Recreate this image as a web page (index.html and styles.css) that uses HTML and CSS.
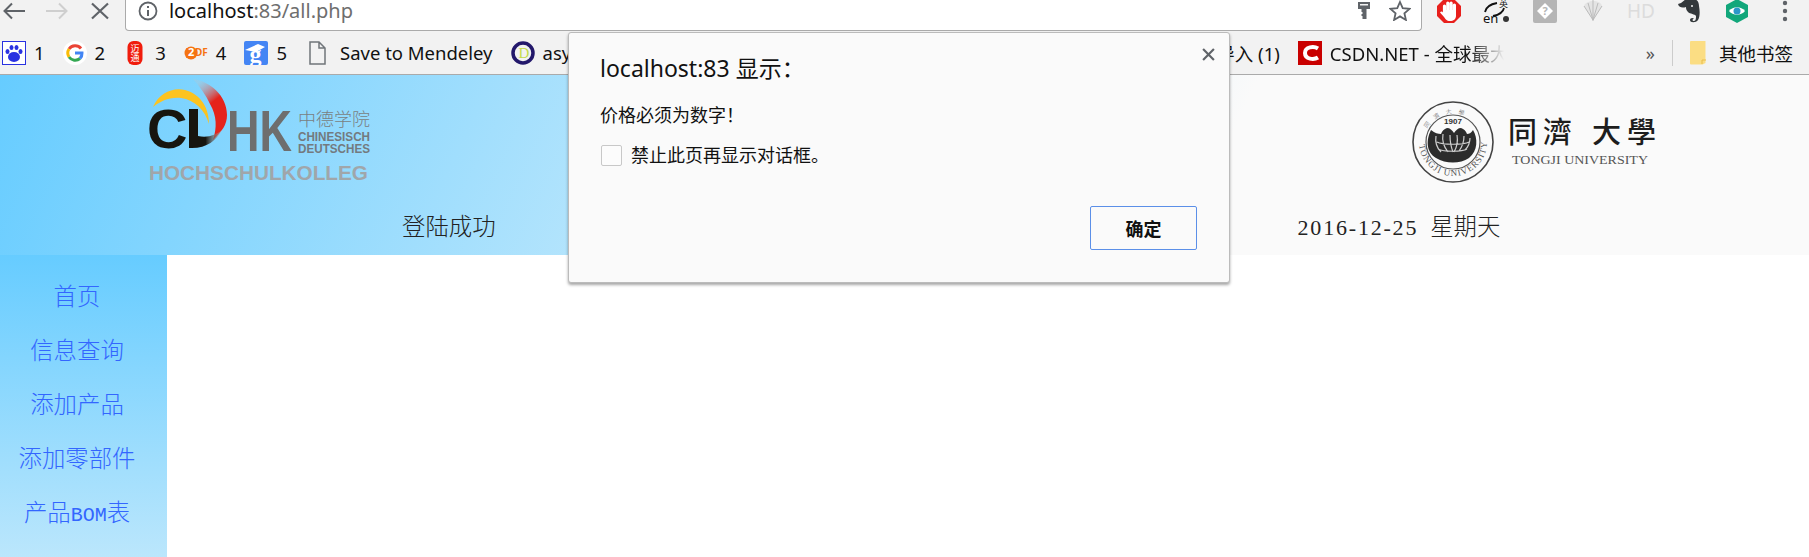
FILE: index.html
```html
<!DOCTYPE html>
<html lang="en">
<head>
    <meta charset="UTF-8">
    <title>localhost:83/all.php</title>
    <link rel="stylesheet" href="styles.css">
</head>
<body>
    <!-- browser toolbar -->
    <div class="toolbar">
        <div class="nav-buttons">
            <svg class="nav-icon" viewBox="0 0 24 20"><path d="M23 10H3M10 2.500L2.500 10l7.500 7.500" fill="none" stroke="#5f6368" stroke-width="2"/></svg>
            <svg class="nav-icon" viewBox="0 0 24 20"><path d="M1 10h20M14 2.500l7.500 7.500-7.500 7.500" fill="none" stroke="#cfcfcf" stroke-width="2"/></svg>
            <svg class="nav-icon" viewBox="0 0 24 20"><path d="M4 2.500l16 15M20 2.500l-16 15" fill="none" stroke="#5f6368" stroke-width="2.200"/></svg>
        </div>
        <div class="address-bar">
            <svg class="info-icon" viewBox="0 0 20 20"><circle cx="10" cy="10" r="8.500" fill="none" stroke="#5f6368" stroke-width="1.800"/><path d="M10 9v6M10 5v2" stroke="#5f6368" stroke-width="2"/></svg>
            <span class="url">localhost<span class="url-rest">:83/all.php</span></span>
            <svg class="key-icon" viewBox="0 0 14 20"><path d="M1 1h12v7H9.500v10h-4v-3h-1v-2h1v-2h-1V8H1z" fill="#5f6368"/><rect x="3" y="3" width="8" height="1.500" fill="#f2f2f2"/></svg>
            <svg class="star-icon" viewBox="0 0 22 21"><path d="M11 2l2.700 6.200 6.800.6-5.100 4.500 1.500 6.600L11 16.400l-5.900 3.500 1.500-6.600L1.500 8.800l6.800-.6z" fill="none" stroke="#5f6368" stroke-width="1.800"/></svg>
        </div>
        <div class="extensions">
            <div class="ext"><svg viewBox="0 0 26 26" width="26" height="26"><path d="M8 1h10l7 7v10l-7 7H8l-7-7V8z" fill="#e8201d"/><path d="M8.500 14V8M11.800 13V5M15.100 13V5M18.400 14V7" stroke="#fff" stroke-width="3.200" stroke-linecap="round" fill="none"/><path d="M7 12h13v6c0 3-2.500 5-6 5-3.500 0-4.500-2-6-4l-4-4.500c1-1.500 2.500-1 3 0z" fill="#fff"/></svg></div>
            <div class="ext"><svg viewBox="0 0 30 26" width="30" height="26"><path d="M3 14c1-5 6-8 12-9M22 10c-1 5-6 7-11 8" fill="none" stroke="#111" stroke-width="1.800"/><text x="17" y="9" class="ext-mini">英</text><text x="1" y="25" class="ext-en">en</text><circle cx="24" cy="21" r="3" fill="#333"/></svg></div>
            <div class="ext"><svg viewBox="0 0 24 24" width="24" height="24"><rect width="24" height="24" rx="2" fill="#b5b5b5"/><path d="M12 4l8 8-8 8-8-8z" fill="#fff"/><text x="12" y="16" class="ext-q">?</text></svg></div>
            <div class="ext"><svg viewBox="0 0 22 26" width="22" height="26"><path d="M2 8c2-6 16-7 18 0l-9 14z" fill="#e4e4e4"/><path d="M11 1v22M2 8l9 14M20 8l-9 14M6 5l5 17M16 5l-5 17" stroke="#bbb" fill="none" stroke-width="1"/></svg></div>
            <div class="ext ext-hd">HD</div>
            <div class="ext"><svg viewBox="0 0 22 26" width="22" height="26"><path d="M3 5l5-4h7c4 0 6 3 6 7 1 5 1 11-1 14-2 3-8 3-8 0 0-2 3-3 4-1-2 0-2 2 0 2 2 0 2-3 2-5-1-2-6-2-8-4-2-2-2-4-2-5-3 1-7 1-8-3z" fill="#33383b"/><circle cx="14" cy="8" r="1" fill="#f2f2f2"/></svg></div>
            <div class="ext"><svg viewBox="0 0 26 26" width="26" height="26"><path d="M13 1l11 6v12l-11 6-11-6V7z" fill="#12a77b"/><path d="M5 13c4-5 12-5 16 0-4 5-12 5-16 0z" fill="#fff"/><circle cx="13" cy="13" r="3.500" fill="#2b97c9"/></svg></div>
            <div class="ext"><svg viewBox="0 0 6 22" width="6" height="22"><circle cx="3" cy="3" r="2.200" fill="#5f6368"/><circle cx="3" cy="11" r="2.200" fill="#5f6368"/><circle cx="3" cy="19" r="2.200" fill="#5f6368"/></svg></div>
        </div>
    </div>

    <!-- bookmarks bar -->
    <div class="bookmarks">
        <div class="bm">
            <svg class="bm-icon" viewBox="0 0 24 24"><rect x=".5" y=".5" width="23" height="23" fill="#fff" stroke="#2932e1"/><ellipse cx="12" cy="16" rx="6" ry="5" fill="#2932e1"/><ellipse cx="5.500" cy="10.500" rx="2" ry="2.500" fill="#2932e1"/><ellipse cx="18.500" cy="10.500" rx="2" ry="2.500" fill="#2932e1"/><ellipse cx="9.500" cy="6.500" rx="2" ry="2.500" fill="#2932e1"/><ellipse cx="14.500" cy="6.500" rx="2" ry="2.500" fill="#2932e1"/></svg>
            <span>1</span>
        </div>
        <div class="bm">
            <svg class="bm-icon" viewBox="0 0 24 24"><circle cx="12" cy="12" r="12" fill="#fff"/><path d="M18 7.500A7.500 7.500 0 0 0 6 8" fill="none" stroke="#ea4335" stroke-width="3"/><path d="M6 8a7.500 7.500 0 0 0 0 8" fill="none" stroke="#fbbc05" stroke-width="3"/><path d="M6 16a7.500 7.500 0 0 0 11 1.500" fill="none" stroke="#34a853" stroke-width="3"/><path d="M12 12h7a7.500 7.500 0 0 1-2 5.500" fill="none" stroke="#4285f4" stroke-width="3"/></svg>
            <span>2</span>
        </div>
        <div class="bm">
            <svg class="bm-icon" viewBox="0 0 24 24"><rect x="4.500" y="0" width="15" height="24" rx="6" fill="#f01c0c"/><text x="12" y="11" class="seal">迈</text><text x="12" y="20" class="seal">通</text></svg>
            <span>3</span>
        </div>
        <div class="bm">
            <svg class="bm-icon" viewBox="0 0 24 24"><circle cx="7" cy="12" r="6.500" fill="#f57312"/><path d="M1 12h3M2 8l2 1M2 16l2-1" stroke="#f57312" stroke-width="2"/><text x="4" y="15" class="zdf">2</text><text x="11" y="15" class="zdf-rest">DF</text></svg>
            <span>4</span>
        </div>
        <div class="bm">
            <svg class="bm-icon" viewBox="0 0 24 24"><rect width="24" height="24" rx="2" fill="#4485f4"/><path d="M1 9l13-6 7 3-9 5z" fill="#fff"/><text x="11.500" y="21" class="scholar">g</text></svg>
            <span>5</span>
        </div>
        <div class="bm bm-doc">
            <svg class="bm-icon" viewBox="0 0 24 24"><path d="M5 1h9l6 6v16H5zM14 1v6h6" fill="none" stroke="#70757a" stroke-width="1.500"/></svg>
            <span>Save to Mendeley</span>
        </div>
        <div class="bm">
            <svg class="bm-icon" viewBox="0 0 24 24"><circle cx="12" cy="12" r="10" fill="none" stroke="#23186b" stroke-width="3.500"/><text x="13" y="17" class="mendeley-d">D</text></svg>
            <span>asy</span>
        </div>
        <div class="bm bm-end">
            <span>导入 (1)</span>
        </div>
        <div class="bm">
            <svg class="bm-icon" viewBox="0 0 24 24"><rect width="24" height="24" fill="#c90000"/><path d="M20 7.500c-4-2.500-13-2-13 4.500s9 7 13 4.500" fill="none" stroke="#fff" stroke-width="4"/></svg>
            <span class="bm-fade">CSDN.NET - 全球最大</span>
        </div>
        <div class="bm-more">»</div>
        <div class="bm-sep"></div>
        <div class="bm bm-other">
            <svg class="folder-icon" viewBox="0 0 18 24"><path d="M1.500 0h15v22l-3 1.500H2a1 1 0 0 1-1-1V1z" fill="#fbdd83"/><path d="M13 23v-4h4" fill="none" stroke="#e8bd4a"/></svg>
            <span>其他书签</span>
        </div>
    </div>

    <!-- page header -->
    <div class="header">
        <div class="logo-row">
            <svg class="logo-clhk" width="230" height="110" viewBox="0 0 230 110">
                <defs>
                    <linearGradient id="red-fade" x1="0.300" y1="0" x2="0.600" y2="0.700">
                        <stop offset="0" stop-color="#b9c4cc" stop-opacity="0.300"/>
                        <stop offset="0.600" stop-color="#e5231b"/>
                    </linearGradient>
                    <linearGradient id="black-fade" x1="0" y1="0" x2="1" y2="0">
                        <stop offset="0" stop-color="#17150f"/>
                        <stop offset="0.500" stop-color="#17150f"/>
                        <stop offset="1" stop-color="#bbb" stop-opacity="0.400"/>
                    </linearGradient>
                </defs>
                <path d="M8 32C14 18 28 12 40 15c12 3 24 14 24 34-4-14-14-24-28-26-12-1-20 3-28 9z" fill="#fcc31f"/>
                <path d="M48 4c16 2 34 16 34 36 0 10-5 16-14 25 4-12 4-24-3-36-4-9-10-17-17-25z" fill="url(#red-fade)"/>
                <text x="2" y="73" class="logo-c">C</text>
                <path d="M44 34h9v27c10 2 18-1 24-6-6 11-16 19-33 18z" fill="url(#black-fade)"/>
                <text x="82" y="76" class="logo-hk" textLength="65" lengthAdjust="spacingAndGlyphs">HK</text>
                <text x="153" y="51" class="logo-zh" textLength="72">中德学院</text>
                <text x="153" y="66" class="logo-de" textLength="72" lengthAdjust="spacingAndGlyphs">CHINESISCH</text>
                <text x="153" y="78" class="logo-de" textLength="72" lengthAdjust="spacingAndGlyphs">DEUTSCHES</text>
                <text x="4" y="105" class="logo-hs" textLength="219" lengthAdjust="spacingAndGlyphs">HOCHSCHULKOLLEG</text>
            </svg>
            <svg class="logo-tongji" width="250" height="90" viewBox="0 0 250 90">
                <circle cx="43" cy="42" r="40" fill="none" stroke="#444" stroke-width="1.600"/>
                <circle cx="43" cy="42" r="27" fill="none" stroke="#555" stroke-width="1.200"/>
                <path id="seal-low" d="M9 42a34 34 0 0 0 68 0" fill="none"/>
                <text class="seal-text"><textPath href="#seal-low" startOffset="3">TONGJI UNIVERSITY</textPath></text>
                <path id="seal-top" d="M14 36a30 30 0 0 1 58 0" fill="none"/>
                <text class="seal-top-text"><textPath href="#seal-top" startOffset="8">同　濟　大　學</textPath></text>
                <text x="43" y="24" class="seal-year">1907</text>
                <path d="M21 30c-5 10-5 22 5 28 10 6 24 6 33 0 9-7 9-20 4-28-2 3-4 4-6 4-1-3-3-5-6-6-3 0-5 2-7 5-2-3-4-5-7-5-3 1-5 3-6 6-3 0-6-1-10-4z" fill="#2c2c2c"/>
                <path d="M26 36c-1 6 1 12 5 16M33 34c-1 6 1 13 5 18M40 35c0 6 1 12 3 17M47 35c1 6 0 12-3 17M54 36c0 5-2 11-5 15M60 38c0 5-2 9-5 12M27 42c5 3 27 3 32 0M28 49c6 3 24 3 29 0" stroke="#ccc" stroke-width="1.200" fill="none"/>
                <text x="98" y="43" class="tongji-zh">同</text>
                <text x="133" y="43" class="tongji-zh">濟</text>
                <text x="182" y="43" class="tongji-zh">大</text>
                <text x="217" y="43" class="tongji-zh">學</text>
                <text x="102" y="64" class="tongji-en" textLength="136" lengthAdjust="spacingAndGlyphs">TONGJI UNIVERSITY</text>
            </svg>
        </div>
        <div class="status-row">
            <span class="login-msg">登陆成功</span>
            <span class="today"><span class="latin">2016-12-25</span><span class="today-week">星期天</span></span>
        </div>
    </div>

    <!-- side menu, right side is empty -->
    <div class="main">
        <ul class="side-menu">
            <li>首页</li>
            <li>信息查询</li>
            <li>添加产品</li>
            <li>添加零部件</li>
            <li>产品<span class="latin-bom">BOM</span>表</li>
        </ul>
    </div>

    <!-- js alert dialog -->
    <div class="dialog">
        <svg class="dialog-close" viewBox="0 0 12 12"><path d="M1 1l10 10M11 1L1 11" stroke="#5f6368" stroke-width="2"/></svg>
        <div class="dialog-title">localhost:83 显示：</div>
        <div class="dialog-msg">价格必须为数字！</div>
        <label class="dialog-check">
            <span class="checkbox"></span>
            <span>禁止此页再显示对话框。</span>
        </label>
        <div class="dialog-actions">
            <button class="ok-btn">确定</button>
        </div>
    </div>
</body>
</html>
```

FILE: styles.css
```css
html, body {
    margin: 0;
    padding: 0;
    height: 557px;
    overflow: hidden;
    background: #fff;
}

body {
    font-family: "Noto Sans", "Noto Sans CJK SC", sans-serif;
    color: #111;
}

/* toolbar */
.toolbar {
    display: flex;
    height: 31px;
    background: #f2f2f2;
    overflow: hidden;
}

.nav-buttons {
    display: flex;
    box-sizing: border-box;
    width: 125px;
    padding: 0 0 9px 2px;
    gap: 19px;
    align-items: center;
}

.nav-icon {
    width: 24px;
    height: 20px;
}

.address-bar {
    display: flex;
    align-items: center;
    box-sizing: border-box;
    width: 1298px;
    height: 31px;
    padding: 0 10px 9px 12px;
    background: #fff;
    border: 1px solid #aaa;
    border-top: 0;
    border-radius: 0 0 4px 4px;
}

.info-icon {
    width: 20px;
    height: 20px;
}

.url {
    margin-left: 11px;
    font-size: 20px;
    line-height: 24px;
    flex: 1;
}

.url-rest {
    color: #6e6e6e;
}

.key-icon {
    width: 14px;
    height: 20px;
    margin-right: 18px;
}

.star-icon {
    width: 22px;
    height: 21px;
}

.extensions {
    display: flex;
    margin-left: 3px;
}

.ext {
    flex: 0 0 48px;
    height: 21px;
    display: flex;
    align-items: center;
    justify-content: center;
}

.ext svg {
    flex: none;
}

.ext-hd {
    font-size: 19px;
    color: #dcdcdc;
}

.ext-mini {
    font-size: 9px;
    fill: #111;
}

.ext-en {
    font-size: 13px;
    fill: #111;
}

.ext-q {
    font-size: 11px;
    text-anchor: middle;
    fill: #b5b5b5;
    font-weight: bold;
}

/* bookmarks */
.bookmarks {
    display: flex;
    align-items: center;
    gap: 18px;
    height: 43px;
    padding-left: 2px;
    background: #f2f2f2;
    border-bottom: 1px solid #aaa;
    font-size: 18.500px;
}

.bm {
    display: flex;
    align-items: center;
    gap: 8px;
    white-space: nowrap;
}

.bm-doc {
    gap: 11px;
}

.bm-end {
    margin-left: auto;
}

.bm-icon {
    width: 24px;
    height: 24px;
    flex: none;
}

.bm-fade {
    display: inline-block;
    width: 174px;
    overflow: hidden;
    -webkit-mask-image: linear-gradient(to right, #000 80%, transparent);
    mask-image: linear-gradient(to right, #000 80%, transparent);
}

.bm-more {
    margin-left: 124px;
    font-size: 18px;
    color: #555;
}

.bm-sep {
    width: 1px;
    height: 26px;
    margin-left: -1px;
    background: #ccc;
}

.bm-other {
    gap: 12px;
    margin-left: -2px;
    margin-right: 16px;
}

.folder-icon {
    width: 18px;
    height: 24px;
}

.seal {
    font-size: 9px;
    fill: #fff;
    text-anchor: middle;
}

.zdf {
    font-size: 11px;
    font-weight: bold;
    fill: #fff;
}

.zdf-rest {
    font-size: 10px;
    font-weight: bold;
    fill: #f57312;
}

.scholar {
    font-family: "Liberation Serif", serif;
    font-size: 24px;
    font-weight: bold;
    fill: #fff;
    text-anchor: middle;
}

.mendeley-d {
    font-family: "Liberation Serif", serif;
    font-size: 15px;
    fill: #c3dc4c;
    text-anchor: middle;
}

/* header */
.header {
    height: 180px;
    background: linear-gradient(115deg, #66ccff 0, #fafafa 1142px);
    font-family: "Noto Sans CJK SC", sans-serif;
    font-size: 23.400px;
    font-weight: 300;
    color: #222;
}

.logo-row {
    display: flex;
    align-items: flex-start;
    height: 130px;
    padding-left: 145px;
}

.logo-clhk {
    flex: none;
}

.logo-tongji {
    flex: none;
    margin-left: 1035px;
    margin-top: 25px;
}

.logo-c {
    font-family: "Liberation Sans", sans-serif;
    font-weight: bold;
    font-size: 56px;
    fill: #17150f;
}

.logo-hk {
    font-family: "Liberation Sans", sans-serif;
    font-weight: bold;
    font-size: 58px;
    fill: #6e6e6e;
}

.logo-zh {
    font-family: "Noto Sans CJK SC", sans-serif;
    font-size: 18px;
    fill: #7a7f83;
}

.logo-de {
    font-family: "Liberation Sans", sans-serif;
    font-weight: bold;
    font-size: 12px;
    fill: #737a7f;
}

.logo-hs {
    font-family: "Liberation Sans", sans-serif;
    font-weight: bold;
    font-size: 20px;
    fill: #a0a6aa;
}

.seal-text {
    font-family: "Liberation Serif", serif;
    font-size: 9px;
    letter-spacing: 1px;
    fill: #555;
}

.seal-top-text {
    font-family: "Noto Sans CJK SC", sans-serif;
    font-size: 6px;
    fill: #555;
}

.seal-year {
    font-family: "Liberation Sans", sans-serif;
    font-size: 8px;
    font-weight: bold;
    text-anchor: middle;
    fill: #333;
}

.tongji-zh {
    font-family: "Noto Sans CJK SC", sans-serif;
    font-size: 29px;
    font-weight: 500;
    fill: #1d1d1d;
}

.tongji-en {
    font-family: "Liberation Serif", serif;
    font-size: 13px;
    fill: #555;
}

.status-row {
    display: flex;
    height: 40px;
    line-height: 40px;
    padding-left: 402px;
}

.today {
    margin-left: 802px;
}

.latin {
    font-family: "Liberation Serif", serif;
    font-size: 22px;
    font-weight: 400;
    letter-spacing: 1.800px;
}

.today-week {
    margin-left: 12px;
}

/* side menu */
.main {
    height: 302px;
}

.side-menu {
    box-sizing: border-box;
    width: 167px;
    height: 302px;
    margin: 0;
    padding: 13px 13px 0 0;
    list-style: none;
    text-align: center;
    background: linear-gradient(to bottom, #66ccff, #fafafa 527px);
    font-family: "Noto Sans CJK SC", sans-serif;
    font-size: 23.400px;
    font-weight: 300;
    color: #3366ff;
}

.side-menu li {
    height: 54px;
    line-height: 54px;
}

.latin-bom {
    font-family: "Liberation Mono", monospace;
    font-size: 20px;
    font-weight: 400;
}

/* alert dialog */
.dialog {
    position: absolute;
    left: 568px;
    top: 32px;
    box-sizing: border-box;
    width: 662px;
    height: 251px;
    padding: 22px 31px 0 31px;
    background: #fafafa;
    border: 1px solid #bbb;
    border-radius: 3px;
    box-shadow: 0 2px 3px rgba(0, 0, 0, 0.35);
}

.dialog-close {
    position: absolute;
    right: 14px;
    top: 15px;
    width: 13px;
    height: 13px;
}

.dialog-title {
    font-size: 23px;
    line-height: 26px;
}

.dialog-msg {
    margin-top: 22px;
    font-size: 18px;
    line-height: 24px;
}

.dialog-check {
    display: flex;
    align-items: center;
    gap: 9px;
    margin-top: 16px;
    font-size: 18px;
    line-height: 24px;
}

.checkbox {
    box-sizing: border-box;
    width: 21px;
    height: 21px;
    margin-left: 1px;
    border: 1px solid #c8c8c8;
    border-radius: 2px;
    background: #fcfcfc;
}

.dialog-actions {
    display: flex;
    justify-content: flex-end;
    margin-top: 39px;
}

.ok-btn {
    width: 107px;
    height: 44px;
    margin-right: 1px;
    background: #fafafa;
    border: 1px solid #5b8fe8;
    border-radius: 2px;
    font-family: "Noto Sans CJK SC", sans-serif;
    font-size: 18px;
    font-weight: bold;
    color: #111;
}
```
